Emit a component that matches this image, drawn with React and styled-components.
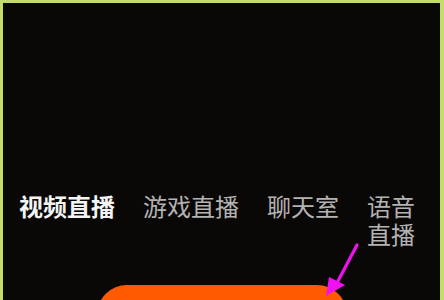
import React from "react";
import styled, { createGlobalStyle } from "styled-components";

const Global = createGlobalStyle`
  html, body {
    margin: 0;
    padding: 0;
    background: #0a0806;
    overflow: hidden;
  }
`;

const Frame = styled.div`
  position: relative;
  width: 444px;
  height: 300px;
  box-sizing: border-box;
  border: solid #c4dc6a;
  border-width: 3px 4px 0 3px;
  background: #0a0806;
  display: flex;
  flex-direction: column;
  align-items: center;
  padding-top: 189px;
  overflow: hidden;
  font-family: "Noto Sans CJK SC", "Noto Sans", sans-serif;
`;

const Tabs = styled.div`
  align-self: stretch;
  display: flex;
  align-items: flex-start;
  gap: 28px;
  padding: 0 16px;
`;

const Tab = styled.div`
  flex-shrink: ${(p) => (p.$squeeze ? 1 : 0)};
  min-width: 0;
  font-size: 24px;
  line-height: 28px;
  font-weight: ${(p) => (p.$active ? 700 : 400)};
  color: ${(p) => (p.$active ? "#f4f4f4" : "#b3b3b3")};
`;

const LiveButton = styled.div`
  margin-top: 37px;
  width: 250px;
  height: 60px;
  flex-shrink: 0;
  border-radius: 30px;
  background: #ff5a00;
`;

const Pointer = styled.svg`
  position: absolute;
  left: 314px;
  top: 236px;
`;

export default function App() {
  const tabs = ["视频直播", "游戏直播", "聊天室", "语音直播"];
  return (
    <>
      <Global />
      <Frame>
        <Tabs>
          {tabs.map((t, i) => (
            <Tab key={t} $active={i === 0} $squeeze={i === tabs.length - 1}>
              {t}
            </Tab>
          ))}
        </Tabs>
        <LiveButton />
        <Pointer width="50" height="64" viewBox="0 0 50 64">
          <line x1="40" y1="6" x2="21" y2="42" stroke="#f010f0" strokeWidth="3.2" strokeLinecap="round" />
          <polygon points="9,57 12,38 28,46" fill="#f010f0" />
        </Pointer>
      </Frame>
    </>
  );
}
